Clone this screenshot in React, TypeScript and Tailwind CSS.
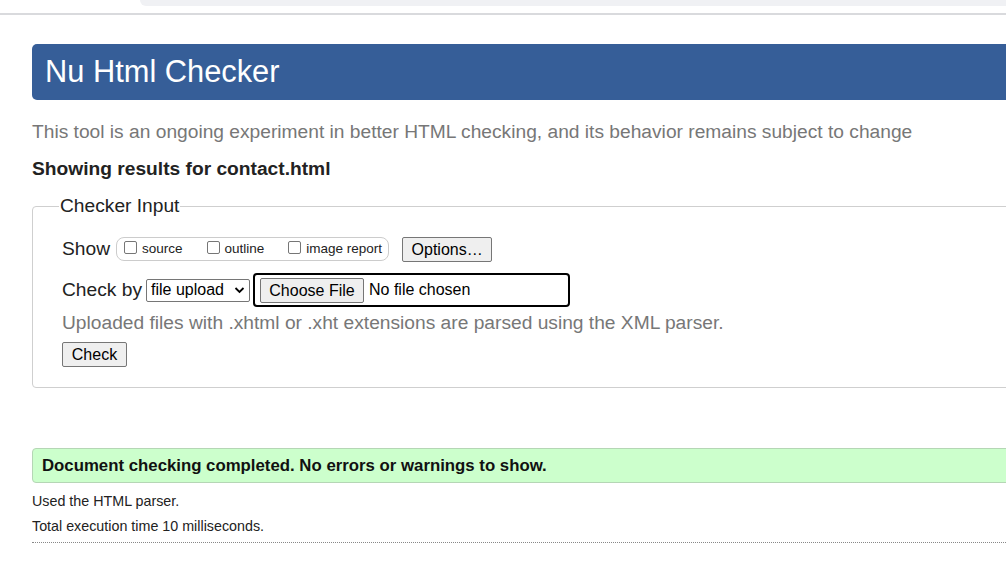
import React from "react";

export default function App() {
  return (
    <div className="w-[1006px] h-[578px] overflow-hidden bg-white font-['Liberation_Sans',Arial,sans-serif] text-[#222]">
      {/* browser strip */}
      <div className="h-[13px] relative">
        <div className="absolute left-[140px] right-0 top-0 h-[6px] bg-[#f0f1f4] rounded-bl-[8px]" />
      </div>
      <div className="h-[2px] bg-[#d9dadd]" />

      <div className="pl-[32px] mr-[-60px] pt-[29px]">
        <h1 className="h-[56px] bg-[#365e98] rounded-[5px] text-white text-[30.8px] leading-[56px] px-[13px]">
          Nu Html Checker
        </h1>

        <p className="mt-[21px] text-[19.2px] leading-[22px] text-[#777]">
          This tool is an ongoing experiment in better HTML checking, and its behavior remains subject to change
        </p>
        <p className="mt-[15px] text-[19.2px] leading-[22px] font-bold text-[#222]">
          Showing results for contact.html
        </p>

        <fieldset className="mt-[15px] border border-[#cfcfcf] rounded-[4px] px-[29px] pb-[20px]">
          <legend className="text-[19.2px] leading-[22px] px-[1px] ml-[-3px] text-[#222]">Checker Input</legend>

          <div className="flex items-center mt-[19px] h-[26px]">
            <span className="text-[19.2px] mr-[6px]">Show</span>
            <div className="flex items-center h-[24px] border border-[#ccc] rounded-[8px] pl-[7px] pr-[6px] text-[13.5px]">
              <label className="flex items-center mr-[24px]">
                <span className="w-[13px] h-[13px] border border-[#767676] rounded-[2px] mr-[5px] mt-[-4px]" />
                source
              </label>
              <label className="flex items-center mr-[24px]">
                <span className="w-[13px] h-[13px] border border-[#767676] rounded-[2px] mr-[5px] mt-[-4px]" />
                outline
              </label>
              <label className="flex items-center">
                <span className="w-[13px] h-[13px] border border-[#767676] rounded-[2px] mr-[5px] mt-[-4px]" />
                image report
              </label>
            </div>
            <button className="ml-[13px] h-[25px] w-[90px] border border-[#767676] bg-[#efefef] rounded-[2px] text-[16px] text-black">
              Options…
            </button>
          </div>

          <div className="flex items-center mt-[11px] h-[34px]">
            <span className="text-[19.2px] mr-[4px]">Check by</span>
            <div className="flex items-center h-[23px] w-[104px] border border-[#767676] rounded-[2px] px-[4px] text-[16px] text-black">
              <span className="flex-1">file upload</span>
              <svg width="11" height="8" viewBox="0 0 11 8" fill="none" stroke="black" strokeWidth="1.8">
                <path d="M1.5 2 L5.5 6 L9.5 2" />
              </svg>
            </div>
            <div className="ml-[3px] flex items-center h-[34px] w-[317px] border-2 border-black rounded-[4px] pl-[5px] text-[16px] text-black">
              <button className="h-[25px] w-[104px] border border-[#767676] bg-[#efefef] rounded-[2px] text-[16px]">
                Choose File
              </button>
              <span className="ml-[5px]">No file chosen</span>
            </div>
          </div>

          <p className="mt-[5px] text-[19.2px] leading-[22px] text-[#777]">
            Uploaded files with .xhtml or .xht extensions are parsed using the XML parser.
          </p>

          <button className="mt-[8px] h-[25px] w-[65px] border border-[#767676] bg-[#efefef] rounded-[2px] text-[16px] text-black">
            Check
          </button>
        </fieldset>

        <div className="mt-[60px] h-[35px] bg-[#ccffcc] border border-[#b5d6b5] rounded-[4px] flex items-center px-[9px] text-[16.8px] font-bold text-[#111]">
          Document checking completed. No errors or warnings to show.
        </div>

        <p className="mt-[10px] text-[14.3px] leading-[17px] text-[#222]">Used the HTML parser.</p>
        <p className="mt-[8px] text-[14.3px] leading-[17px] text-[#222]">Total execution time 10 milliseconds.</p>
        <div className="mt-[7px] border-b border-dotted border-[#888]" />
      </div>
    </div>
  );
}
